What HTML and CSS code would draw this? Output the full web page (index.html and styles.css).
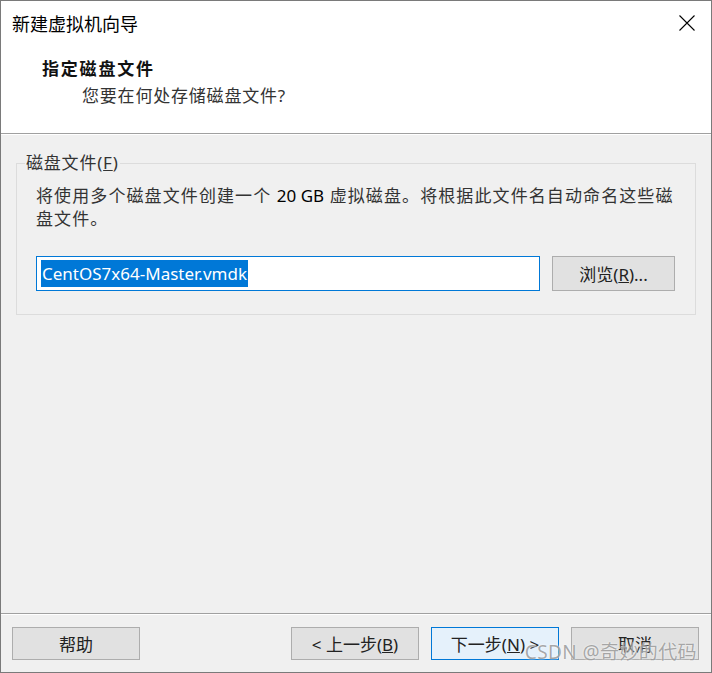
FILE: index.html
```html
<!DOCTYPE html>
<html lang="zh-CN">
<head>
  <meta charset="UTF-8" />
  <title>新建虚拟机向导</title>
  <link rel="stylesheet" href="styles.css">
</head>
<body>

<div class="window">
  <!-- Заголовок окна и шаг мастера -->
  <div class="header">
    <div class="titlebar">
      <span class="title">新建虚拟机向导</span>
      <svg class="close" width="16" height="16" viewBox="0 0 16 16">
        <path d="M0.5 0.5 L15.5 15.5 M15.5 0.5 L0.5 15.5" stroke="#000" stroke-width="1.1" fill="none"/>
      </svg>
    </div>
    <div class="intro">
      <div class="step-title">指定磁盘文件</div>
      <div class="step-sub">您要在何处存储磁盘文件?</div>
    </div>
  </div>

  <div class="sep"></div>

  <div class="content">
    <fieldset class="group">
      <legend>磁盘文件(<u>F</u>)</legend>
      <div class="group-body">
        <p class="note">将使用多个磁盘文件创建一个 <span class="lat">20 GB</span> 虚拟磁盘。将根据此文件名自动命名这些磁<br>盘文件。</p>
        <div class="file-row">
          <div class="field"><span class="sel">CentOS7x64-Master.vmdk</span></div>
          <button class="btn browse">浏览(<u>R</u>)...</button>
        </div>
      </div>
    </fieldset>
  </div>

  <div class="sep"></div>

  <div class="footer">
    <button class="btn">帮助</button>
    <div class="spacer"></div>
    <button class="btn">&lt; 上一步(<u>B</u>)</button>
    <button class="btn primary">下一步(<u>N</u>) &gt;</button>
    <button class="btn">取消</button>
  </div>

  <div class="watermark">CSDN @奇妙的代码</div>
</div>

</body>
</html>
```

FILE: styles.css
```css
html, body {
  margin: 0;
  padding: 0;
  background: #f0f0f0;
  font-family: 'Noto Sans', 'Noto Sans CJK SC', sans-serif;
}

.window {
  position: relative;
  box-sizing: border-box;
  width: 712px;
  height: 673px;
  border: 1px solid #7a7a7a;
  background: #f0f0f0;
  display: flex;
  flex-direction: column;
  overflow: hidden;
}

/* Шапка */
.header {
  height: 132px;
  background: #fff;
  flex: none;
}

.titlebar {
  height: 44px;
  display: flex;
  align-items: center;
  justify-content: space-between;
  padding: 0 16px 0 11px;
}

.title {
  font-family: 'Noto Sans CJK SC', sans-serif;
  font-size: 18px;
  color: #000;
  line-height: 24px;
}

.close {
  display: block;
  margin-top: -1px;
}

.intro {
  padding: 11px 0 0 41px;
}

.step-title {
  font-family: 'Noto Sans CJK SC', sans-serif;
  font-weight: bold;
  font-size: 17px;
  line-height: 24px;
  letter-spacing: 1.8px;
  color: #111;
}

.step-sub {
  margin: 4px 0 0 40px;
  font-family: 'Noto Sans', 'Noto Sans CJK SC', sans-serif;
  font-size: 17px;
  line-height: 24px;
  letter-spacing: 0.8px;
  color: #333;
}

.sep {
  height: 1px;
  border-top: 1px solid #a0a0a0;
  background: #fff;
  flex: none;
}

/* Содержимое */
.content {
  flex: 1;
  padding: 16px 15px 0 15px;
}

.group {
  margin: 0;
  padding: 0 0 23px 0;
  border: 1px solid #dcdcdc;
}

.group legend {
  margin-left: 8px;
  padding: 0 1px;
  font-size: 17px;
  line-height: 24px;
  letter-spacing: 0.8px;
  color: #333;
}

.group-body {
  padding: 0 19px;
}

.note {
  margin: 9px 0 0 0;
  font-size: 17px;
  line-height: 23px;
  letter-spacing: 1.1px;
  color: #333;
}

.note .lat {
  color: #000;
  letter-spacing: 0;
}

.file-row {
  display: flex;
  gap: 12px;
  margin-top: 26px;
}

.field {
  box-sizing: border-box;
  width: 504px;
  height: 35px;
  border: 1px solid #0078d7;
  background: #fff;
  padding: 3px 0 0 4px;
}

.sel {
  display: inline-block;
  background: #0078d7;
  color: #fff;
  font-size: 17px;
  line-height: 27px;
  padding: 0 1px;
}

.btn {
  box-sizing: border-box;
  width: 128px;
  height: 33px;
  background: #e1e1e1;
  border: 1px solid #adadad;
  padding: 0;
  font-family: 'Noto Sans', 'Noto Sans CJK SC', sans-serif;
  font-size: 17px;
  color: #222;
  cursor: pointer;
}

.btn.browse {
  width: 123px;
  height: 35px;
}

.btn.primary {
  background: #e5f1fb;
  border-color: #0078d7;
}

/* Нижняя панель */
.footer {
  flex: none;
  display: flex;
  gap: 12px;
  padding: 12px 12px 12px 11px;
}

.spacer {
  flex: 1;
}

.watermark {
  position: absolute;
  right: 14px;
  bottom: 8px;
  font-family: 'Noto Sans', 'Noto Sans CJK SC', sans-serif;
  font-size: 19px;
  line-height: 24px;
  letter-spacing: 0.4px;
  color: rgba(140, 140, 140, 0.75);
  text-shadow: 0 0 2px #fff;
  pointer-events: none;
}
```
